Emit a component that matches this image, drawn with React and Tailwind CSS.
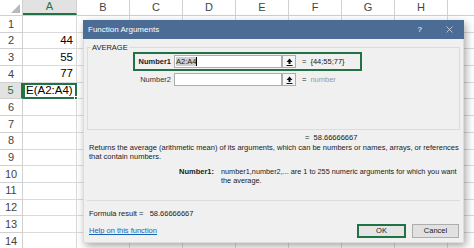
import { X } from "lucide-react";

const rows = [
  { n: 1, a: "" },
  { n: 2, a: "44" },
  { n: 3, a: "55" },
  { n: 4, a: "77" },
  { n: 5, a: "E(A2:A4)", sel: true },
  { n: 6, a: "" },
  { n: 7, a: "" },
  { n: 8, a: "" },
  { n: 9, a: "" },
  { n: 10, a: "" },
  { n: 11, a: "" },
  { n: 12, a: "" },
  { n: 13, a: "" },
  { n: 14, a: "" },
];

const cols = ["B", "C", "D", "E", "F", "G", "H", ""];

function UpButton() {
  return (
    <div className="flex h-[13px] w-[14px] shrink-0 items-center justify-center border border-[#adadad] bg-[#f6f6f6]">
      <svg width="7" height="8" viewBox="0 0 7 8">
        <path d="M3.5 0.5 L6.5 4 L4.5 4 L4.5 6 L2.5 6 L2.5 4 L0.5 4 Z" fill="#111" />
        <rect x="0.5" y="7" width="6" height="1" fill="#111" />
      </svg>
    </div>
  );
}

function Sheet() {
  return (
    <div className="font-['Liberation_Sans',Arial,sans-serif] text-[11px] text-[#222]">
      {/* column headers */}
      <div className="flex h-[16px] border-b border-[#d0d0d0] bg-white">
        <div className="relative w-[23px] shrink-0 border-r border-[#d0d0d0]">
          <svg className="absolute bottom-[2px] right-[2px]" width="9" height="9" viewBox="0 0 9 9">
            <path d="M9 0 L9 9 L0 9 Z" fill="#b8b8b8" />
          </svg>
        </div>
        <div className="flex w-[54px] shrink-0 items-center justify-center border-r border-b-2 border-r-[#d0d0d0] border-b-[#217346] bg-[#e2e2e2] text-[#217346]">
          A
        </div>
        {cols.map((c, i) => (
          <div key={i} className="flex w-[53px] shrink-0 items-center justify-center border-r border-[#d0d0d0] text-[#444]">
            {c}
          </div>
        ))}
      </div>
      {rows.map((r) => (
        <div key={r.n} className="flex h-[16.7px]">
          <div
            className={
              r.sel
                ? "flex w-[23px] shrink-0 items-center justify-center border-r-2 border-b border-r-[#217346] border-b-[#d0d0d0] bg-[#e2e2e2] text-[#217346]"
                : "flex w-[23px] shrink-0 items-center justify-center border-r border-b border-[#d0d0d0] text-[#444]"
            }
          >
            {r.n}
          </div>
          {r.sel ? (
            <div className="relative flex w-[54px] shrink-0 items-center border-2 border-[#217346] pl-[1px] text-[11.5px] text-black">
              {r.a}
              <div className="absolute -bottom-[3px] -right-[3px] h-[4px] w-[4px] border border-white bg-[#217346]" />
            </div>
          ) : (
            <div className="flex w-[54px] shrink-0 items-center justify-end border-r border-b border-[#dadada] pr-[3px] text-[11.5px] text-black">
              {r.a}
            </div>
          )}
          {cols.map((c, i) => (
            <div key={i} className="w-[53px] shrink-0 border-r border-b border-[#dadada]" />
          ))}
        </div>
      ))}
    </div>
  );
}

function Dialog() {
  return (
    <div className="absolute left-[83px] top-[20px] flex h-[223px] w-[381px] flex-col bg-[#f0f0f0] font-['Liberation_Sans',Arial,sans-serif] text-[7.5px] text-[#1a1a1a] shadow-[2px_3px_8px_rgba(0,0,0,0.35)]">
      <div className="flex h-[19px] shrink-0 items-center bg-[#4b6d95] pl-[5px] pr-[9px] text-white">
        <span className="text-[8px]">Function Arguments</span>
        <span className="ml-auto mr-[22px] text-[8px]">?</span>
        <X size={11} strokeWidth={1.3} color="#fff" />
      </div>
      <div className="flex flex-1 flex-col border-x border-b border-[#dcdcdc] pt-[4px]">
        <fieldset className="mx-[3px] border border-[#dcdcdc]">
          <legend className="ml-[3px] px-[1px] leading-[9px]">AVERAGE</legend>
          <div className="ml-[45px] flex h-[19px] w-[229px] items-center border-2 border-[#217346]">
            <div className="w-[36px] shrink-0 text-right font-bold">Number1</div>
            <div className="ml-[3px] flex h-[13px] w-[108px] shrink-0 items-center border border-[#adadad] bg-white pl-[1px]">
              <span className="bg-[#cfcfcf] leading-[9px]">A2:A4</span>
              <span className="h-[9px] w-[1px] bg-black" />
            </div>
            <UpButton />
            <span className="ml-[6px]">=</span>
            <span className="ml-[4px]">{"{44;55;77}"}</span>
          </div>
          <div className="ml-[45px] flex h-[18px] w-[229px] items-start border-2 border-transparent">
            <div className="w-[36px] shrink-0 text-right leading-[13px] text-[#333]">Number2</div>
            <div className="ml-[3px] h-[13px] w-[108px] shrink-0 border border-[#adadad] bg-white" />
            <UpButton />
            <span className="ml-[6px] leading-[13px]">=</span>
            <span className="ml-[4px] leading-[13px] text-[#9a9a9a]">number</span>
          </div>
          <div className="h-[40px]" />
        </fieldset>
        <div className="mt-[3px] pl-[221px] leading-[9px]">= &nbsp;58.66666667</div>
        <div className="mt-[2px] whitespace-nowrap pl-[5px] leading-[8.5px]">
          Returns the average (arithmetic mean) of its arguments, which can be numbers or names, arrays, or references
          <br />
          that contain numbers.
        </div>
        <div className="mt-[5.5px] flex leading-[9px]">
          <div className="w-[130px] shrink-0 text-right font-bold">Number1:</div>
          <div className="ml-[7px] whitespace-nowrap text-[7.3px]">
            number1,number2,... are 1 to 255 numeric arguments for which you want
            <br />
            the average.
          </div>
        </div>
        <div className="mx-[3px] mt-auto border-t border-[#dcdcdc]" />
        <div className="mt-[8px] pl-[5px] leading-[9px]">Formula result = &nbsp;&nbsp;58.66666667</div>
        <div className="mt-[6.5px] mb-[4px] flex items-center pl-[5px] pr-[4px]">
          <span className="text-[#1a5fb4] underline">Help on this function</span>
          <button className="ml-auto h-[14px] w-[49px] border-2 border-[#217346] bg-[#e5e5e5] leading-[10px]">OK</button>
          <button className="ml-[6px] h-[14px] w-[47px] border border-[#adadad] bg-[#e1e1e1] leading-[12px]">Cancel</button>
        </div>
      </div>
    </div>
  );
}

export default function App() {
  return (
    <div className="relative h-[248px] w-[474px] overflow-hidden bg-white">
      <Sheet />
      <Dialog />
    </div>
  );
}
